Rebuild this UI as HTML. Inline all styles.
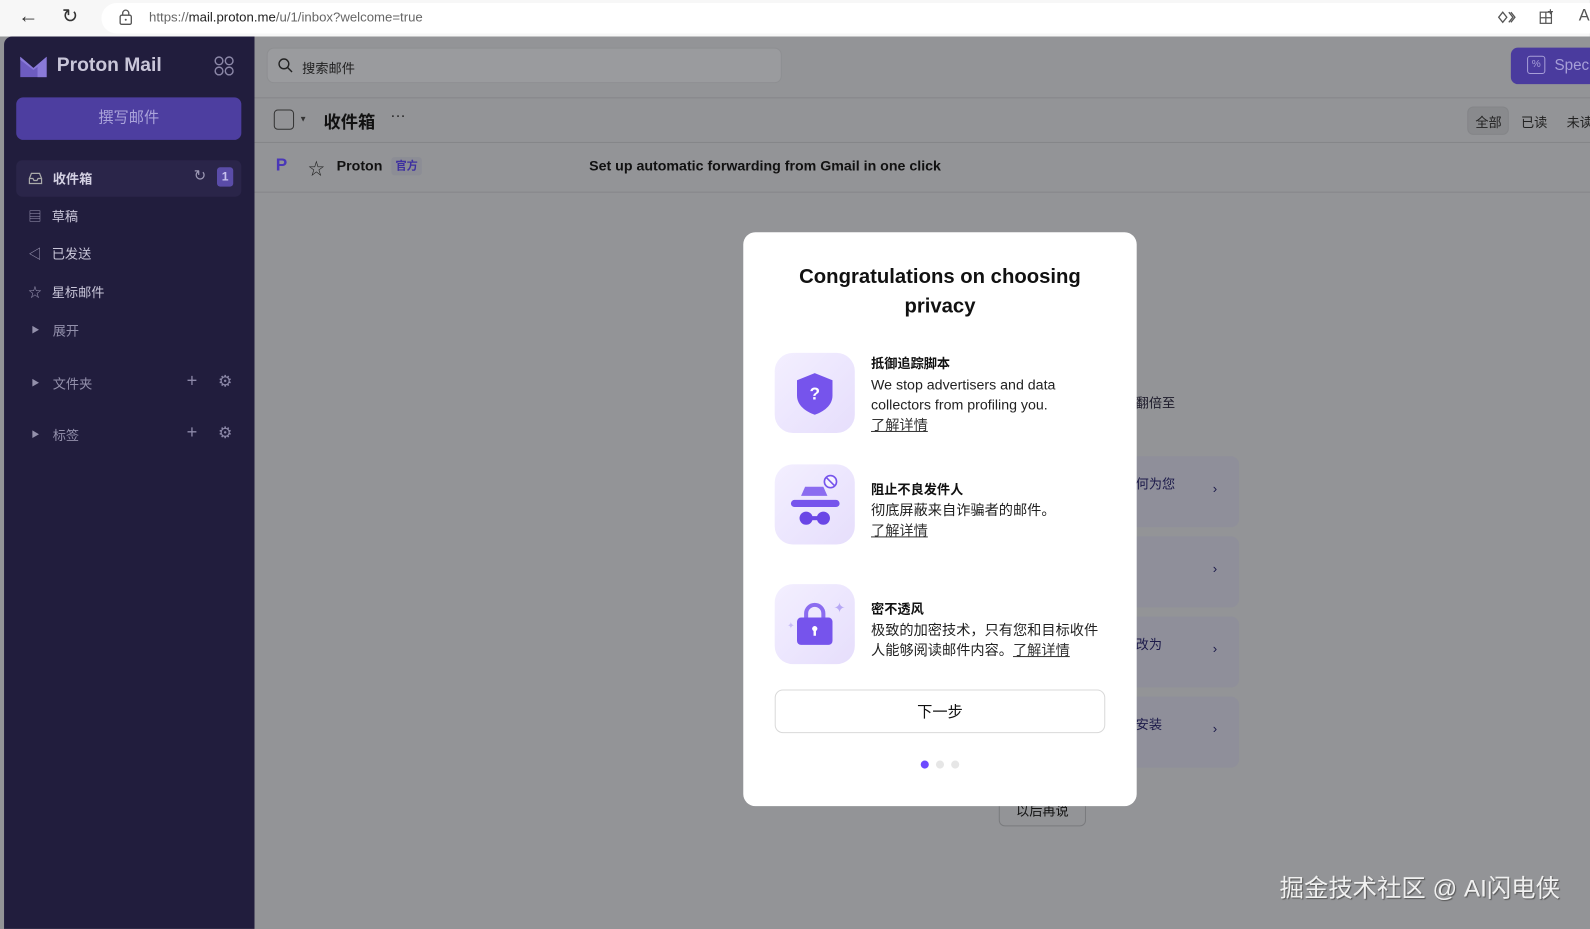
<!DOCTYPE html>
<html><head><meta charset="utf-8"><style>
*{box-sizing:border-box;margin:0;padding:0}
html,body{width:1590px;height:923px;overflow:hidden;background:#939497}
#w{position:absolute;left:0;top:0;width:1568px;height:911px;transform:scale(1.0140);transform-origin:0 0;font-family:"Liberation Sans","Noto Sans CJK SC",sans-serif;white-space:nowrap}
.abs{position:absolute}
.top{left:0;top:0;width:1568px;height:36px;background:#f7f7f7}
.url{left:100px;top:3px;width:1480px;height:30px;background:#fff;border-radius:15px 0 0 15px}
.side{left:4px;top:36px;width:247px;height:880px;background:#211d3d;border-radius:8px 0 0 0}
.main{left:251px;top:36px;width:1330px;height:880px;background:#939497}
.nav{position:absolute;left:28px;font-size:13px;color:#c9c6d9;display:flex;align-items:center;gap:10px}
.modal{left:733px;top:229px;width:388px;height:566px;background:#fff;border-radius:12px;white-space:normal}
.feat{position:absolute;left:31px;width:330px}
.ic{position:absolute;left:0;width:79px;height:79px;border-radius:18px;background:linear-gradient(135deg,#f3efff,#e6defc)}
.tx{position:absolute;left:95px;font-size:14px;line-height:20px;color:#222;width:228px}
.tx b{font-weight:700;color:#111;font-size:13px}
.tx u{color:#333}
.card{left:1110px;width:112px;height:70px;background:#8f8f9a;border-radius:8px;font-size:13px;color:#1c1a4a}
.card span{position:absolute;left:10px;top:17px}
.card i{position:absolute;left:86px;top:24px;font-style:normal;color:#1c1a4a}
</style></head><body><div id="w">
<div class="abs top"></div>
<div class="abs url"></div>
<div class="abs" style="left:18px;top:5px;font-size:20px;color:#333">←</div>
<div class="abs" style="left:61px;top:5px;font-size:19px;color:#333">↻</div>
<svg class="abs" style="left:117px;top:9px" width="14" height="16"><rect x="1.5" y="6" width="11" height="9" rx="1.5" fill="none" stroke="#555" stroke-width="1.3"/><path d="M4 6V4a3 3 0 0 1 6 0v2" fill="none" stroke="#555" stroke-width="1.3"/><circle cx="7" cy="10.5" r="1" fill="#555"/></svg>
<div class="abs" style="left:147px;top:9px;font-size:13px;color:#666">https://<span style="color:#222">mail.proton.me</span>/u/1/inbox?welcome=true</div>
<svg class="abs" style="left:1477px;top:10px" width="20" height="14" fill="none" stroke="#555" stroke-width="1.3"><path d="M5 2 L1 7 L5 12 L9 7Z M11 2 L15 7 L11 12 M13 2 L17 7 L13 12"/></svg>
<svg class="abs" style="left:1518px;top:9px" width="15" height="15" fill="none" stroke="#555" stroke-width="1.2"><rect x="1" y="3" width="11" height="11"/><path d="M6.5 3V14M1 8.5H12M11 0V5M8.5 2.5H13.5"/></svg>
<div class="abs" style="left:1557px;top:7px;font-size:16px;color:#555">A</div>

<div class="abs side"></div>
<svg class="abs" style="left:19px;top:54px" width="30" height="24"><path d="M1 2 L14 13 L27 2 V22 H1 Z" fill="#6d5cc0"/><path d="M1 2 L14 13 L27 2 L27 22 L18 22 L18 12 L14 15 L1 5Z" fill="#8a7ad8"/></svg>
<div class="abs" style="left:56px;top:54px;font-size:19px;color:#c9c6d9;font-weight:600">Proton Mail</div>
<svg class="abs" style="left:211px;top:55px" width="20" height="20" fill="none" stroke="#8c88a8" stroke-width="1.4"><circle cx="5" cy="5" r="3.8"/><circle cx="15" cy="5" r="3.8"/><circle cx="5" cy="15" r="3.8"/><circle cx="15" cy="15" r="3.8"/></svg>
<div class="abs" style="left:16px;top:96px;width:222px;height:42px;background:#4d3ea0;border-radius:7px;color:#aaa3da;font-size:15px;text-align:center;line-height:42px">撰写邮件</div>
<div class="abs" style="left:16px;top:158px;width:222px;height:36px;background:#2a2549;border-radius:6px"></div>
<div class="nav" style="top:166px;font-weight:700;color:#d4d1e3"><svg width="14" height="12" fill="none" stroke="#aaa" stroke-width="1.2"><path d="M1 6 L3 1 H11 L13 6 V11 H1Z M1 6 H4.5 L5.5 8 H8.5 L9.5 6 H13"/></svg>收件箱</div>
<div class="abs" style="left:191px;top:164px;font-size:15px;color:#9d99b5">↻</div>
<div class="abs" style="left:214px;top:165px;width:16px;height:19px;background:#5a4ca8;border-radius:3px;color:#c8c2ee;font-size:12px;text-align:center;line-height:19px;font-weight:700">1</div>
<div class="nav" style="top:203px"><span style="color:#9d99b5">▤</span>草稿</div>
<div class="nav" style="top:240px"><span style="color:#9d99b5">◁</span>已发送</div>
<div class="nav" style="top:278px"><span style="color:#9d99b5">☆</span>星标邮件</div>
<div class="nav" style="top:316px;color:#9390ab"><span style="font-size:8px;margin:0 3px">▶</span>展开</div>
<div class="nav" style="top:368px;color:#9390ab"><span style="font-size:8px;margin:0 3px">▶</span>文件夹</div>
<div class="nav" style="top:419px;color:#9390ab"><span style="font-size:8px;margin:0 3px">▶</span>标签</div>
<div class="abs" style="left:184px;top:365px;font-size:18px;color:#8c88a8">+</div>
<div class="abs" style="left:215px;top:366px;font-size:16px;color:#8c88a8">⚙</div>
<div class="abs" style="left:184px;top:416px;font-size:18px;color:#8c88a8">+</div>
<div class="abs" style="left:215px;top:417px;font-size:16px;color:#8c88a8">⚙</div>

<div class="abs main"></div>
<div class="abs" style="left:263px;top:47px;width:508px;height:35px;background:#9a9b9e;border-radius:7px;border:1px solid #8e8f92"></div>
<svg class="abs" style="left:274px;top:57px" width="15" height="15" fill="none" stroke="#222" stroke-width="1.4"><circle cx="6" cy="6" r="4.8"/><path d="M9.5 9.5 L14 14"/></svg>
<div class="abs" style="left:298px;top:57px;font-size:13px;color:#222">搜索邮件</div>
<div class="abs" style="left:1490px;top:47px;width:90px;height:36px;background:#4a3b9e;border-radius:7px 0 0 7px"></div>
<div class="abs" style="left:1506px;top:55px;width:18px;height:18px;border:1.4px solid #a79fd8;border-radius:3px;color:#a79fd8;font-size:10px;text-align:center;line-height:16px">%</div>
<div class="abs" style="left:1533px;top:56px;font-size:15px;color:#a79fd8">Spec</div>
<div class="abs" style="left:251px;top:96px;width:1330px;height:1px;background:#858689"></div>
<div class="abs" style="left:270px;top:108px;width:20px;height:20px;border:1.3px solid #333;border-radius:4px"></div>
<div class="abs" style="left:295px;top:113px;font-size:8px;color:#333">▼</div>
<div class="abs" style="left:319px;top:106px;font-size:17px;font-weight:700;color:#111">收件箱</div>
<div class="abs" style="left:385px;top:106px;font-size:15px;color:#222">···</div>
<div class="abs" style="left:1447px;top:105px;width:41px;height:28px;background:#898a8d;border-radius:6px;border:1px solid #848588"></div>
<div class="abs" style="left:1455px;top:110px;font-size:13px;color:#222">全部</div>
<div class="abs" style="left:1500px;top:110px;font-size:13px;color:#222">已读</div>
<div class="abs" style="left:1545px;top:110px;font-size:13px;color:#222">未读</div>
<div class="abs" style="left:251px;top:140px;width:1330px;height:1px;background:#858689"></div>
<div class="abs" style="left:251px;top:189px;width:1330px;height:1px;background:#858689"></div>
<div class="abs" style="left:272px;top:153px;font-size:17px;font-weight:900;color:#4a37b8">P</div>
<div class="abs" style="left:304px;top:153px;font-size:16px;color:#222">☆</div>
<div class="abs" style="left:332px;top:155px;font-size:14px;font-weight:600;color:#111">Proton</div>
<div class="abs" style="left:386px;top:155px;width:30px;height:18px;background:#8c8d95;border-radius:3px;color:#3d2fa0;font-size:11px;text-align:center;line-height:18px;font-weight:700">官方</div>
<div class="abs" style="left:581px;top:155px;font-size:14px;font-weight:600;color:#111">Set up automatic forwarding from Gmail in one click</div>

<div class="abs" style="left:1120px;top:387px;font-size:13px;color:#1c1a2a">翻倍至</div>
<div class="abs card" style="top:450px"><span>何为您</span><i>›</i></div>
<div class="abs card" style="top:529px"><i>›</i></div>
<div class="abs card" style="top:608px"><span>改为</span><i>›</i></div>
<div class="abs card" style="top:687px"><span>安装</span><i>›</i></div>
<div class="abs" style="left:985px;top:780px;width:86px;height:35px;border:1px solid #7a7b7e;border-radius:6px;font-size:13px;color:#111;text-align:center;line-height:38px">以后再说</div>
<div class="abs" style="left:1262px;top:856px;font-size:24px;color:#f0f0f0;text-shadow:1px 1px 1px #555">掘金技术社区 @ AI闪电侠</div>

<div class="abs modal">
 <div style="position:absolute;top:30px;left:0;width:388px;text-align:center;font-size:20px;font-weight:700;line-height:29px;color:#111">Congratulations on choosing<br>privacy</div>
 <div class="feat" style="top:119px">
  <div class="ic"><svg width="79" height="79"><path d="M22 27 L39.5 20 L57 27 V42 C57 52 48 58 39.5 61 C31 58 22 52 22 42Z" fill="#7654ec"/><text x="39.5" y="46" font-size="17" font-weight="700" fill="#fff" text-anchor="middle" font-family="Liberation Sans">?</text></svg></div>
  <div class="tx" style="top:0;width:205px"><b>抵御追踪脚本</b><br>We stop advertisers and data collectors from profiling you.<br><u>了解详情</u></div>
 </div>
 <div class="feat" style="top:229px">
  <div class="ic"><svg width="79" height="79"><path d="M26 31 L30 22 L48 22 L52 31Z" fill="#8b6cf0"/><rect x="16" y="35" width="48" height="7" rx="3.5" fill="#7654ec"/><circle cx="31" cy="53" r="6.5" fill="#6a46e6"/><circle cx="48" cy="53" r="6.5" fill="#6a46e6"/><rect x="31" y="51" width="17" height="4" fill="#6a46e6"/><circle cx="55" cy="17" r="6" fill="#f6f3ff" stroke="#7654ec" stroke-width="1.6"/><path d="M51 13 L59 21" stroke="#7654ec" stroke-width="1.6"/></svg></div>
  <div class="tx" style="top:14px"><b>阻止不良发件人</b><br>彻底屏蔽来自诈骗者的邮件。<br><u>了解详情</u></div>
 </div>
 <div class="feat" style="top:347px">
  <div class="ic"><svg width="79" height="79"><path d="M31 34 V29 a8.5 8.5 0 0 1 17 0 V34" fill="none" stroke="#8b6cf0" stroke-width="4"/><rect x="22" y="33" width="35" height="27" rx="4" fill="#7654ec"/><circle cx="39.5" cy="44" r="2.6" fill="#fff"/><rect x="38.3" y="44" width="2.4" height="7" fill="#fff"/><text x="64" y="28" font-size="14" fill="#b7a8f5" text-anchor="middle">✦</text><text x="16" y="44" font-size="9" fill="#c9bdf7" text-anchor="middle">✦</text></svg></div>
  <div class="tx" style="top:14px"><b>密不透风</b><br>极致的加密技术，只有您和目标收件人能够阅读邮件内容。<u>了解详情</u></div>
 </div>
 <div style="position:absolute;left:31px;top:451px;width:326px;height:43px;border:1px solid #d9d9d9;border-radius:8px;text-align:center;line-height:43px;font-size:15px;color:#111">下一步</div>
 <div style="position:absolute;left:175px;top:521px;width:8px;height:8px;border-radius:50%;background:#6d4aff"></div>
 <div style="position:absolute;left:190px;top:521px;width:8px;height:8px;border-radius:50%;background:#e6e6e6"></div>
 <div style="position:absolute;left:205px;top:521px;width:8px;height:8px;border-radius:50%;background:#e6e6e6"></div>
</div>
</div></body></html>
